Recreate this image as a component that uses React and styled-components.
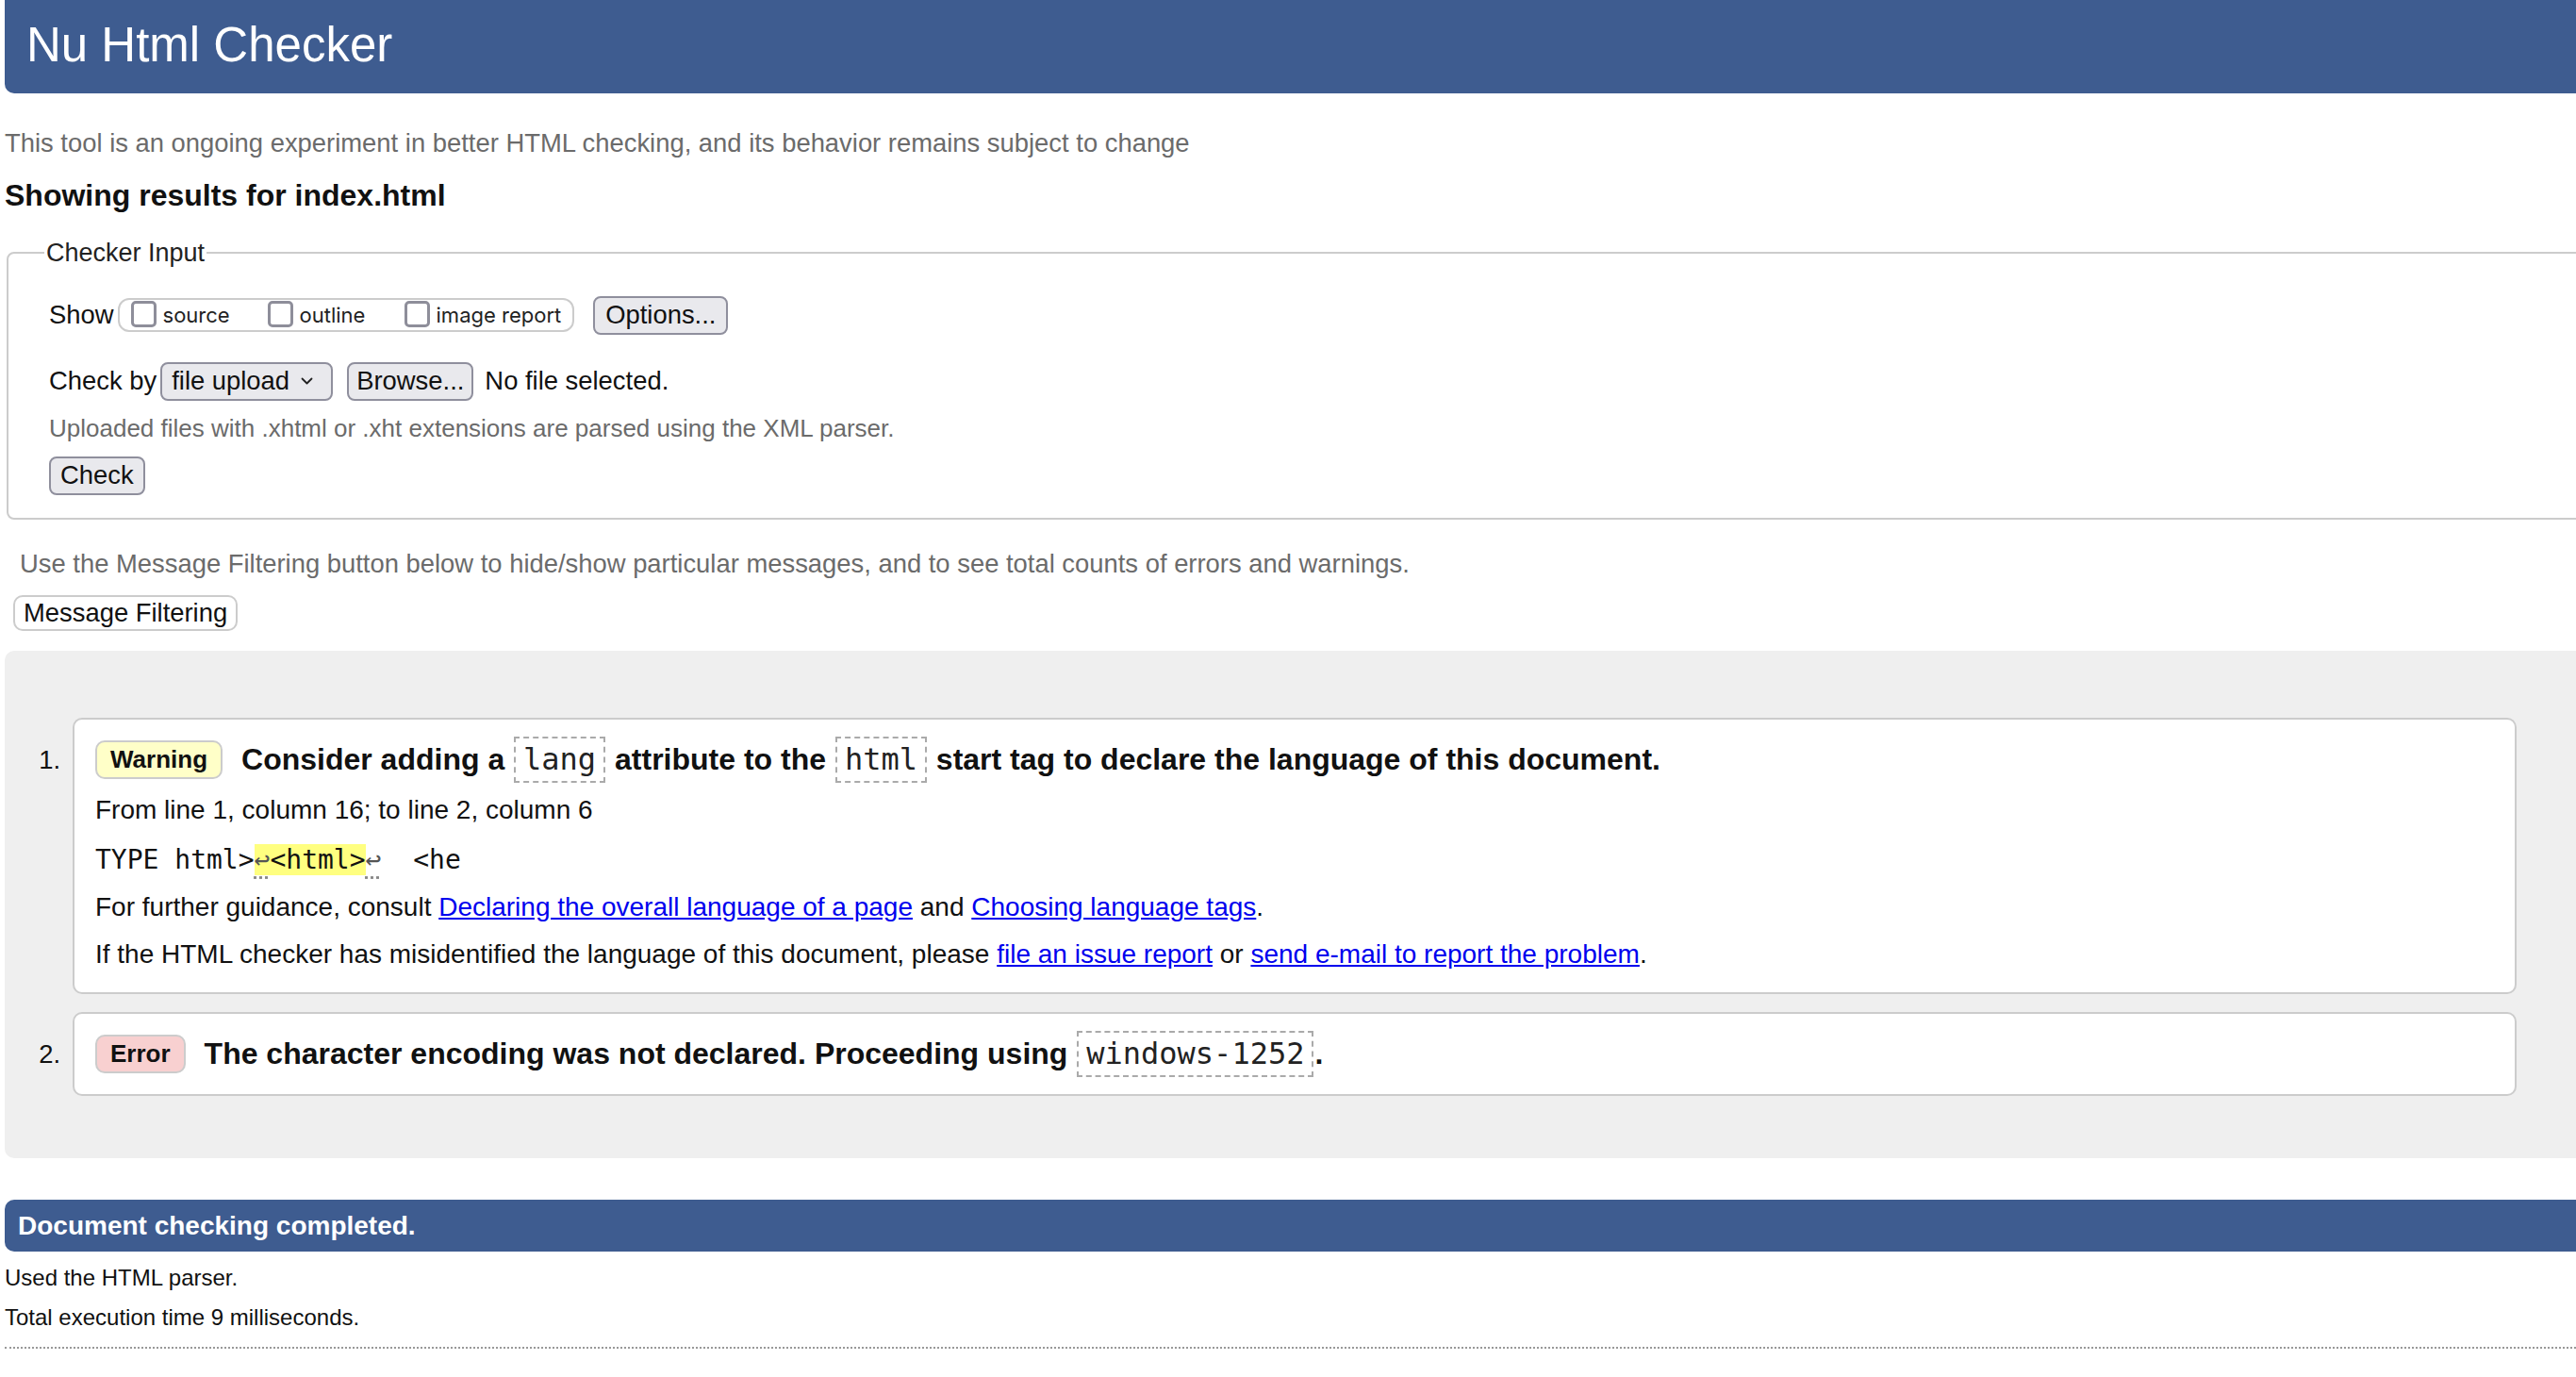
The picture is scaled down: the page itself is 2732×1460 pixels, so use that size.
import React from 'react'
import styled, { createGlobalStyle } from 'styled-components'

const GlobalStyle = createGlobalStyle`
  html, body {
    margin: 0;
    padding: 0;
    background: #fff;
    overflow: hidden;
  }
  body {
    font-family: "Liberation Sans", Arial, sans-serif;
    font-size: 27.4px;
    color: #111;
  }
`

const Page = styled.div`
  width: 2732px;
  height: 1460px;
  overflow: hidden;
`

const Header = styled.h1`
  margin: 0 0 0 5px;
  height: 99px;
  box-sizing: border-box;
  padding: 0 0 5px 23px;
  display: flex;
  align-items: center;
  background: #3e5c90;
  color: #fff;
  font-weight: normal;
  font-size: 51px;
  border-radius: 0 0 0 10px;
`

const Muted = styled.p`
  margin: ${p => p.$top}px 0 0 ${p => p.$left}px;
  line-height: 30px;
  font-size: ${p => p.$size || 27.4}px;
  color: #6b6b6b;
`

const Title = styled.h2`
  margin: 22px 0 0 5px;
  font-size: 32px;
  line-height: 36px;
`

const Fieldset = styled.fieldset`
  margin: 28px -20px 0 7px;
  border: 2px solid #ccc;
  border-radius: 8px;
  padding: 0 0 25px 43px;
  legend {
    margin-left: -5px;
    padding: 0 2px;
    line-height: 30px;
    font-size: 27px;
    color: #222;
  }
`

const Row = styled.div`
  display: flex;
  align-items: center;
  height: 40px;
  margin-top: ${p => p.$top}px;
`

const Group = styled.div`
  display: flex;
  align-items: center;
  height: 36px;
  box-sizing: border-box;
  border: 2px solid #ccc;
  border-radius: 12px;
  padding: 0 12px;
  margin: 0 20px 0 4px;
`

const Choice = styled.label`
  display: flex;
  align-items: center;
  gap: 7px;
  width: ${p => (p.$last ? 'auto' : '145px')};
  font-family: Inter, "Liberation Sans", sans-serif;
  font-size: 22px;
  color: #222;
`

const Box = styled.span`
  width: 27px;
  height: 28px;
  box-sizing: border-box;
  border: 3px solid #8e8e9a;
  border-radius: 5px;
  background: #fff;
  margin-top: -3px;
`

const Button = styled.button`
  height: 41px;
  margin-left: ${p => p.$ml || 0}px;
  padding: 0 ${p => p.$pad || 10}px;
  font-family: "Liberation Sans", Arial, sans-serif;
  font-size: 27.4px;
  color: #111;
  background: ${p => (p.$plain ? '#fff' : '#e9e9ed')};
  border: 2px solid ${p => (p.$plain ? '#ccc' : '#8f8f9d')};
  border-radius: ${p => (p.$plain ? 10 : 8)}px;
`

const Select = styled(Button).attrs({ as: 'div' })`
  display: flex;
  align-items: center;
  gap: 12px;
  box-sizing: border-box;
  width: 183px;
  padding: 0 10px;
`

const Note = styled.span`
  margin-left: 12px;
`

const FilterButton = styled(Button)`
  display: block;
  height: 38px;
  margin: 18px 0 0 14px;
`

const Results = styled.ol`
  list-style: none;
  margin: 21px -20px 0 5px;
  padding: 71px 83px 66px 0;
  background: #efefef;
  border-radius: 10px 0 0 10px;
`

const Item = styled.li`
  display: flex;
  align-items: flex-start;
  margin-top: ${p => (p.$first ? 0 : 19)}px;
`

const Num = styled.span`
  flex: 0 0 72px;
  box-sizing: border-box;
  padding: 0 13px 0 0;
  text-align: right;
  line-height: 49px;
  margin-top: 20px;
`

const Card = styled.div`
  flex: 1;
  background: #fff;
  border: 2px solid #ccc;
  border-radius: 10px;
  padding: 18px 22px ${p => p.$bottom || 18}px;
`

const Message = styled.p`
  margin: 0;
  display: flex;
  align-items: center;
  height: 49px;
  font-weight: bold;
  font-size: 32px;
  white-space: pre;
`

const Badge = styled.span`
  display: inline-flex;
  align-items: center;
  height: 41px;
  box-sizing: border-box;
  padding: 0 14px;
  margin-right: 20px;
  font-size: 26px;
  border: 2px solid #ccc;
  border-radius: 10px;
  background: ${p => (p.$kind === 'error' ? '#f8d0d0' : '#ffffc8')};
`

const Code = styled.code`
  display: inline-block;
  height: 49px;
  box-sizing: border-box;
  padding: 0 8px;
  margin: 0 1px;
  border: 2px dashed #aaa;
  font-family: "DejaVu Sans Mono", monospace;
  font-size: 32px;
  font-weight: normal;
  line-height: 45px;
  color: #222;
`

const Line = styled.p`
  margin: ${p => p.$top || 20}px 0 0;
  font-size: 28px;
  line-height: 30px;
`

const Extract = styled(Line)`
  font-family: "DejaVu Sans Mono", monospace;
  font-size: 28px;
  white-space: pre;
`

const Mark = styled.mark`
  background: #ffff80;
  color: #111;
`

const Lf = styled.span`
  color: #555;
  text-decoration: underline dotted #888;
  text-underline-offset: 8px;
`

const Link = styled.a`
  color: #0000ee;
  text-decoration: underline;
`

const Done = styled.h2`
  margin: 44px -20px 0 5px;
  height: 55px;
  box-sizing: border-box;
  padding-left: 14px;
  display: flex;
  align-items: center;
  background: #3e5c90;
  color: #fff;
  font-size: 28px;
  border-radius: 10px 0 0 10px;
`

const Stat = styled.p`
  margin: 14px 0 0 5px;
  font-size: 24px;
  line-height: 28px;
`

const Rule = styled.hr`
  margin: 17px 0 0 5px;
  border: 0;
  border-top: 2px dotted #999;
`

function Chevron() {
  return (
    <svg width="13" height="8" viewBox="0 0 13 8" fill="none">
      <path d="M1.5 1.5l5 5 5-5" stroke="#222" strokeWidth="1.8" strokeLinecap="round" strokeLinejoin="round" />
    </svg>
  )
}

export default function App() {
  return (
    <Page>
      <GlobalStyle />
      <Header>Nu Html Checker</Header>
      <Muted $top={38} $left={5}>
        This tool is an ongoing experiment in better HTML checking, and its behavior remains subject to change
      </Muted>
      <Title>Showing results for index.html</Title>

      <Fieldset>
        <legend>Checker Input</legend>
        <Row $top={31}>
          <span>Show</span>
          <Group>
            <Choice><Box />source</Choice>
            <Choice><Box />outline</Choice>
            <Choice $last><Box />image report</Choice>
          </Group>
          <Button $pad={11}>Options...</Button>
        </Row>
        <Row $top={30}>
          <span>Check by</span>
          <Select $ml={4}>
            <span>file upload</span>
            <Chevron />
          </Select>
          <Button $pad={8} $ml={15}>Browse...</Button>
          <Note>No file selected.</Note>
        </Row>
        <Muted $top={15} $left={0} $size={26}>
          Uploaded files with .xhtml or .xht extensions are parsed using the XML parser.
        </Muted>
        <Row $top={15}>
          <Button>Check</Button>
        </Row>
      </Fieldset>

      <Muted $top={32} $left={21}>
        Use the Message Filtering button below to hide/show particular messages, and to see total counts of errors and warnings.
      </Muted>
      <FilterButton $plain $pad={9}>Message Filtering</FilterButton>

      <Results>
        <Item $first>
          <Num>1.</Num>
          <Card $bottom={25}>
            <Message>
              <Badge>Warning</Badge>Consider adding a <Code>lang</Code> attribute to the <Code>html</Code> start tag to declare the language of this document.
            </Message>
            <Line $top={14}>From line 1, column 16; to line 2, column 6</Line>
            <Extract $top={23}>
              TYPE html&gt;<Mark><Lf>↩</Lf>&lt;html&gt;</Mark><Lf>↩</Lf>  &lt;he
            </Extract>
            <Line>
              For further guidance, consult <Link href="#">Declaring the overall language of a page</Link> and{' '}
              <Link href="#">Choosing language tags</Link>.
            </Line>
            <Line>
              If the HTML checker has misidentified the language of this document, please{' '}
              <Link href="#">file an issue report</Link> or <Link href="#">send e-mail to report the problem</Link>.
            </Line>
          </Card>
        </Item>
        <Item>
          <Num>2.</Num>
          <Card>
            <Message>
              <Badge $kind="error">Error</Badge>The character encoding was not declared. Proceeding using <Code>windows-1252</Code>.
            </Message>
          </Card>
        </Item>
      </Results>

      <Done>Document checking completed.</Done>
      <Stat>Used the HTML parser.</Stat>
      <Stat>Total execution time 9 milliseconds.</Stat>
      <Rule />
    </Page>
  )
}
